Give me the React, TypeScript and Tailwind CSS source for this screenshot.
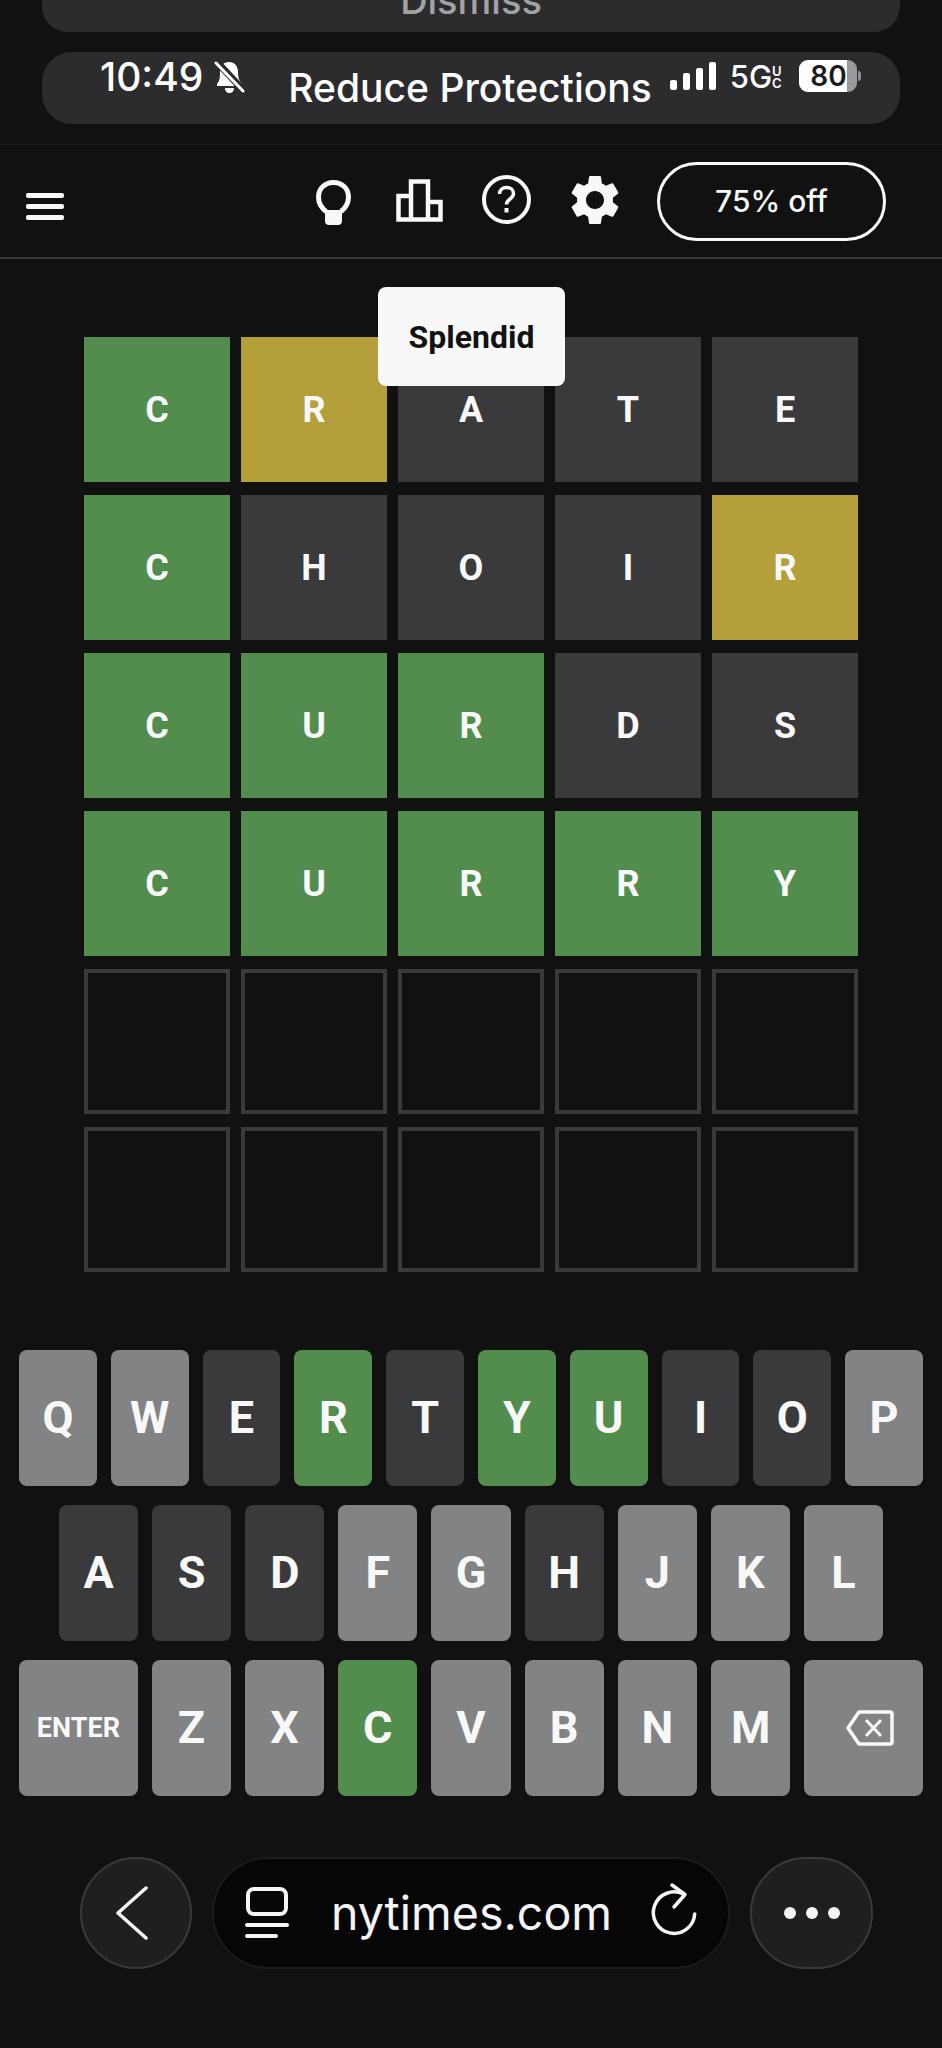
import { MdSettings } from "react-icons/md";

type Mark = "correct" | "present" | "absent" | "empty";

const BOARD: [string, Mark][][] = [
  [["C", "correct"], ["R", "present"], ["A", "absent"], ["T", "absent"], ["E", "absent"]],
  [["C", "correct"], ["H", "absent"], ["O", "absent"], ["I", "absent"], ["R", "present"]],
  [["C", "correct"], ["U", "correct"], ["R", "correct"], ["D", "absent"], ["S", "absent"]],
  [["C", "correct"], ["U", "correct"], ["R", "correct"], ["R", "correct"], ["Y", "correct"]],
  [["", "empty"], ["", "empty"], ["", "empty"], ["", "empty"], ["", "empty"]],
  [["", "empty"], ["", "empty"], ["", "empty"], ["", "empty"], ["", "empty"]],
];

const TILE: Record<Mark, string> = {
  correct: "bg-[#538d4e]",
  present: "bg-[#b59f3b]",
  absent: "bg-[#3a3a3c]",
  empty: "border-4 border-[#3a3a3c]",
};

const KEY: Record<string, string> = {
  c: "bg-[#538d4e]",
  d: "bg-[#3a3a3c]",
  u: "bg-[#818384]",
};

const ROW1: [string, string][] = [["Q", "u"], ["W", "u"], ["E", "d"], ["R", "c"], ["T", "d"], ["Y", "c"], ["U", "c"], ["I", "d"], ["O", "d"], ["P", "u"]];
const ROW2: [string, string][] = [["A", "d"], ["S", "d"], ["D", "d"], ["F", "u"], ["G", "u"], ["H", "d"], ["J", "u"], ["K", "u"], ["L", "u"]];
const ROW3: [string, string][] = [["Z", "u"], ["X", "u"], ["C", "c"], ["V", "u"], ["B", "u"], ["N", "u"], ["M", "u"]];

function Key({ label, state }: { label: string; state: string }) {
  return (
    <div className={`flex-1 h-full rounded-lg flex items-center justify-center text-[45px] font-bold text-[#f8f8f8] font-['Roboto',sans-serif] ${KEY[state]}`}>
      {label}
    </div>
  );
}

function BellOff() {
  return (
    <svg width="32" height="33" viewBox="0 0 32 33" className="mt-[8px] ml-[11px]">
      <path d="M15 2c5.500 0 9 4 9 10 0 6 1.500 9 4 12v2H3v-2c2.500-3 3-6 3-12 0-6 3.500-10 9-10z" fill="#fff" />
      <path d="M11 28h9c0 3-2 5-4.500 5S11 31 11 28z" fill="#fff" />
      <path d="M3 2l27 29" stroke="#2c2c2e" strokeWidth="7" />
      <path d="M2 3l27 28" stroke="#fff" strokeWidth="3" strokeLinecap="round" />
    </svg>
  );
}

function Signal() {
  return (
    <div className="flex items-end gap-[6px] h-[28px]">
      <div className="w-[7px] h-[10px] rounded-[2px] bg-white" />
      <div className="w-[7px] h-[17px] rounded-[2px] bg-white" />
      <div className="w-[7px] h-[22px] rounded-[2px] bg-white" />
      <div className="w-[7px] h-[28px] rounded-[2px] bg-white" />
    </div>
  );
}

export default function App() {
  return (
    <div className="relative w-[942px] h-[2048px] overflow-hidden bg-[#111112] font-['Inter',sans-serif]">
      {/* notification pills */}
      <div className="mx-[42px] h-[32px] rounded-b-[26px] bg-[#2c2c2e] overflow-hidden flex justify-center items-end">
        <span className="text-[38px] leading-[46px] mb-[9px] font-medium text-[#a3a3a6]">Dismiss</span>
      </div>
      <div className="mx-[42px] mt-[20px] h-[72px] rounded-[30px] bg-[#2c2c2e] flex items-start text-white">
        <span className="ml-[58px] mt-[3px] text-[39px] leading-[44px] font-medium">10:49</span>
        <BellOff />
        <span className="ml-[42px] mt-[13px] text-[39px] leading-[46px] font-medium whitespace-nowrap">Reduce Protections</span>
        <div className="ml-[18px] mt-[10px]"><Signal /></div>
        <span className="ml-[14px] mt-[10px] text-[31px] leading-[30px] font-medium">5G</span>
        <div className="flex flex-col mt-[13px] text-[13px] leading-[12px] font-semibold"><span>U</span><span>C</span></div>
        <div className="ml-[17px] mt-[8px] flex items-center">
          <div className="w-[58px] h-[32px] rounded-[9px] overflow-hidden flex bg-[#9a9a9c]">
            <div className="w-[48px] h-full bg-white text-[#1c1c1e] text-[28px] leading-[32px] font-semibold text-right">80</div>
          </div>
          <div className="ml-[1px] w-[3px] h-[10px] rounded-r-sm bg-[#8e8e90]" />
        </div>
      </div>

      {/* game header */}
      <div className="mt-[20px] h-[115px] border-t border-[#1d1d1e] border-b-2 border-b-[#3a3a3c] flex items-center text-[#f8f8f8]">
        <div className="ml-[26px] mt-[10px] w-[38px] flex flex-col gap-[6px]">
          <div className="h-[5px] rounded-[2px] bg-[#f8f8f8]" />
          <div className="h-[5px] rounded-[2px] bg-[#f8f8f8]" />
          <div className="h-[5px] rounded-[2px] bg-[#f8f8f8]" />
        </div>
        <svg width="35" height="46" viewBox="0 0 35 46" className="ml-[252px] mt-[4px]">
          <path d="M10 31.500C5 27.500 2.500 23 2.500 17 2.500 8.500 9 2.500 17.500 2.500S32.500 8.500 32.500 17c0 6-2.500 10.500-7.500 14.500" fill="none" stroke="#f8f8f8" strokeWidth="5" />
          <path d="M9 30h17v11c0 2.500-1.500 4-4 4h-9c-2.500 0-4-1.500-4-4z" fill="#f8f8f8" />
        </svg>
        <svg width="47" height="43" viewBox="0 0 47 43" className="ml-[45px] -mt-[1px]">
          <path d="M2.500 40.500V17H15V2.500h17V23h12.500v17.500zM15 17v23.500M32 23v17.500" fill="none" stroke="#f8f8f8" strokeWidth="4.500" />
        </svg>
        <svg width="49" height="49" viewBox="0 0 49 49" className="ml-[39px] -mt-[3px]">
          <circle cx="24.500" cy="24.500" r="22.500" fill="none" stroke="#f8f8f8" strokeWidth="4" />
          <path d="M17.500 19c0-4 3-6.500 7-6.500s7 2.500 7 6c0 5.500-7 5.500-7 11" fill="none" stroke="#f8f8f8" strokeWidth="3.500" />
          <rect x="22.500" y="33" width="4" height="4.500" fill="#f8f8f8" />
        </svg>
        <MdSettings size={60} color="#f8f8f8" className="ml-[34px] -mt-[3px]" />
        <div className="ml-[32px] w-[229px] h-[79px] rounded-[40px] border-[3px] border-[#f8f8f8] flex items-center justify-center text-[30px] font-medium">
          75% off
        </div>
      </div>

      {/* board */}
      <div className="relative pt-[78px]">
        <div className="ml-[84px] w-[774px] grid grid-cols-5 gap-x-[11px] gap-y-[13px]">
          {BOARD.flat().map(([letter, mark], i) => (
            <div
              key={i}
              className={`h-[145px] flex items-center justify-center text-[36px] font-bold text-[#f8f8f8] font-['Roboto',sans-serif] ${TILE[mark]}`}
            >
              {letter}
            </div>
          ))}
        </div>
        <div className="absolute left-[378px] top-[28px] w-[187px] h-[99px] rounded-lg bg-[#f8f8f8] flex items-center justify-center text-[32px] font-bold text-[#121213] font-['Roboto',sans-serif]">
          Splendid
        </div>
      </div>

      {/* keyboard */}
      <div className="mt-[78px] px-[19px] flex flex-col gap-[19px]">
        <div className="h-[136px] flex gap-[14px]">
          {ROW1.map(([k, s]) => <Key key={k} label={k} state={s} />)}
        </div>
        <div className="h-[136px] px-[40px] flex gap-[14px]">
          {ROW2.map(([k, s]) => <Key key={k} label={k} state={s} />)}
        </div>
        <div className="h-[136px] flex gap-[14px]">
          <div className="flex-[1.5] h-full rounded-lg bg-[#818384] flex items-center justify-center text-[27px] font-bold text-[#f8f8f8] font-['Roboto',sans-serif]">
            ENTER
          </div>
          {ROW3.map(([k, s]) => <Key key={k} label={k} state={s} />)}
          <div className="flex-[1.5] h-full rounded-lg bg-[#818384] flex items-center justify-center">
            <svg width="48" height="36" viewBox="0 0 48 36" className="ml-[12px]">
              <path d="M13 2h31a2 2 0 0 1 2 2v28a2 2 0 0 1-2 2H13L2 18z" fill="none" stroke="#f8f8f8" strokeWidth="3.500" strokeLinejoin="round" />
              <path d="M20 10l15 16M35 10L20 26" fill="none" stroke="#f8f8f8" strokeWidth="3" />
            </svg>
          </div>
        </div>
      </div>

      {/* browser bar */}
      <div className="mt-[61px] ml-[80px] w-[793px] h-[112px] flex gap-[20px]">
        <div className="w-[112px] h-full rounded-full bg-[#1f1f20] border-2 border-[#3a3a3b] flex items-center justify-center">
          <svg width="34" height="54" viewBox="0 0 34 54" className="-ml-[8px]">
            <path d="M31 2L3 27l28 25" fill="none" stroke="#f5f5f5" strokeWidth="3.500" strokeLinecap="round" strokeLinejoin="round" />
          </svg>
        </div>
        <div className="w-[518px] h-full rounded-full bg-[#060606] border-2 border-[#1c1c1d] flex items-center text-[#f5f5f5]">
          <svg width="44" height="52" viewBox="0 0 44 52" className="ml-[31px]">
            <rect x="3" y="2" width="38" height="25" rx="6" fill="none" stroke="#f5f5f5" strokeWidth="4" />
            <path d="M2 38h40" stroke="#f5f5f5" strokeWidth="4" strokeLinecap="round" />
            <path d="M2 49h29" stroke="#f5f5f5" strokeWidth="4" strokeLinecap="round" />
          </svg>
          <span className="ml-[42px] text-[46.500px] leading-none whitespace-nowrap">nytimes.com</span>
          <svg width="50" height="58" viewBox="20 10 50 58" className="ml-[37px] -mt-[6px]">
            <path d="M55 23.500A20.700 20.700 0 1 0 65.700 43" fill="none" stroke="#f5f5f5" strokeWidth="3.500" strokeLinecap="round" />
            <path d="M43 14l13 9.500L45 36" fill="none" stroke="#f5f5f5" strokeWidth="3.500" strokeLinecap="round" strokeLinejoin="round" />
          </svg>
        </div>
        <div className="w-[123px] h-full rounded-full bg-[#1f1f20] border-2 border-[#3a3a3b] flex items-center justify-center gap-[10px]">
          <div className="w-[12px] h-[12px] rounded-full bg-[#f5f5f5]" />
          <div className="w-[12px] h-[12px] rounded-full bg-[#f5f5f5]" />
          <div className="w-[12px] h-[12px] rounded-full bg-[#f5f5f5]" />
        </div>
      </div>
    </div>
  );
}
